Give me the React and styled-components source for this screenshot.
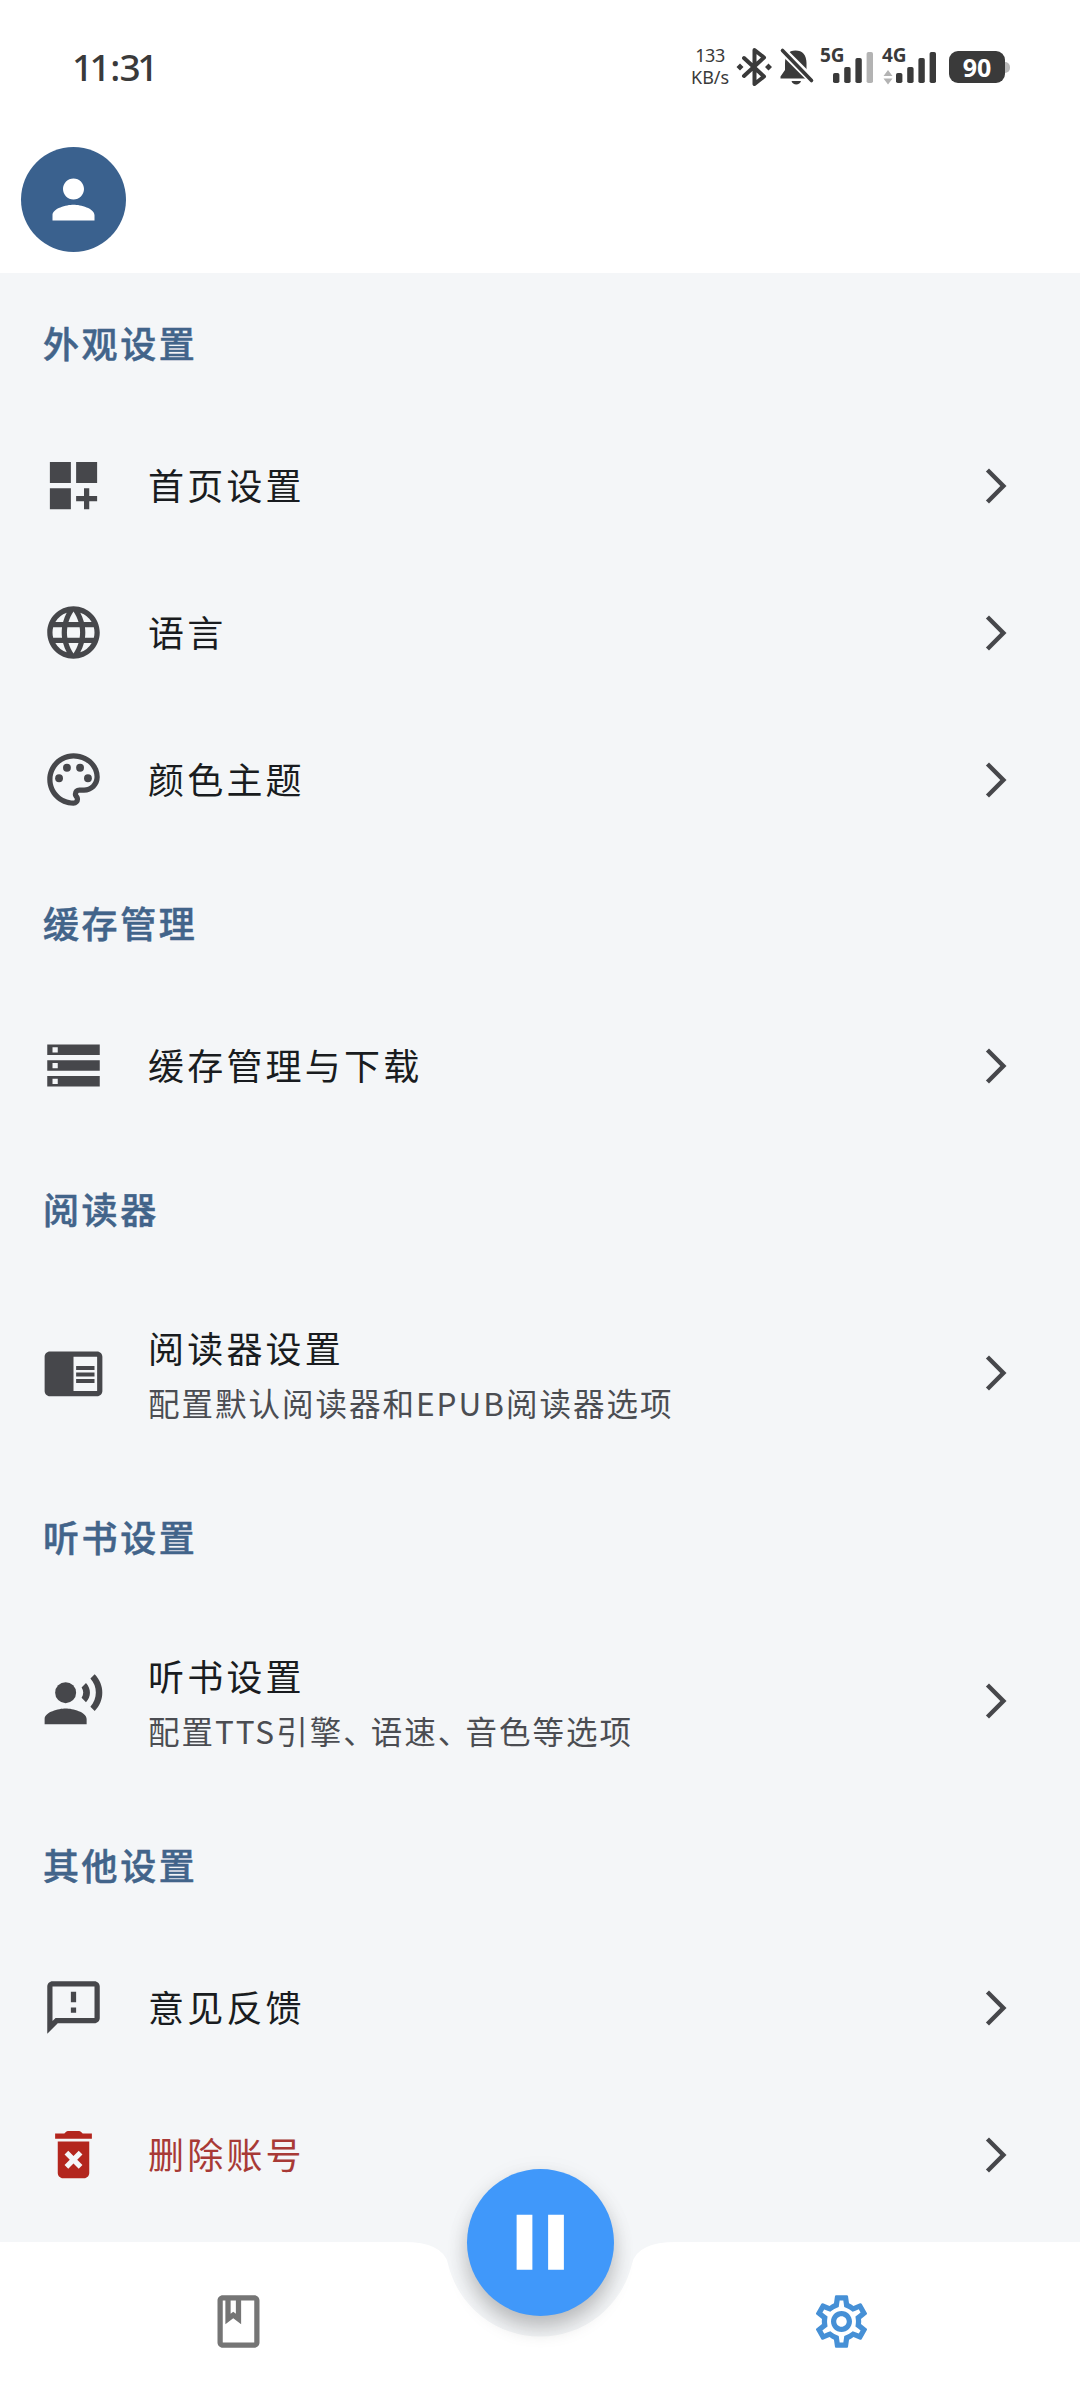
import { useState } from "react";
import styled, { createGlobalStyle } from "styled-components";
import {
  MdArrowForwardIos,
  MdChromeReaderMode,
  MdDashboardCustomize,
  MdLanguage,
  MdOutlineBook,
  MdOutlineFeedback,
  MdOutlinePalette,
  MdOutlineSettings,
  MdPause,
  MdPerson,
  MdRecordVoiceOver,
  MdStorage,
} from "react-icons/md";

const GlobalStyle = createGlobalStyle`
  * {
    box-sizing: border-box;
  }
  body {
    margin: 0;
    background: #fff;
    font-family: "Noto Sans CJK SC", sans-serif;
  }
  svg {
    display: block;
    flex-shrink: 0;
    overflow: visible;
  }
`;

const Screen = styled.div`
  width: 1080px;
  height: 2400px;
  display: flex;
  flex-direction: column;
  position: relative;
  overflow: hidden;
  background: #f4f6f8;
`;

const StatusBar = styled.div`
  height: 126px;
  padding: 8px 70px 0 72px;
  display: flex;
  align-items: center;
  justify-content: space-between;
  background: #fff;
  color: #3a3a3a;
`;

const Clock = styled.div`
  font-family: "Noto Sans", sans-serif;
  font-size: 37px;
  font-weight: 500;
  line-height: 50px;
  letter-spacing: -3.6px;
`;

const Colon = styled.span`
  margin: 0 3px 0 3px;
`;

const StatusIcons = styled.div`
  display: flex;
  align-items: center;
  height: 40px;
`;

const Speed = styled.div`
  width: 38px;
  margin-right: 7px;
  font-family: "Noto Sans", sans-serif;
  font-size: 18px;
  line-height: 22px;
  text-align: center;
  white-space: nowrap;
`;

const SpeedValue = styled.div`
  letter-spacing: -0.4px;
  margin-top: -2px;
`;

const Gap = styled.span`
  width: ${(props) => props.$size}px;
`;

const SignalBox = styled.div`
  position: relative;
`;

const SignalLabel = styled.span`
  position: absolute;
  left: 0;
  top: -5px;
  font-family: "Noto Sans", sans-serif;
  font-size: 19px;
  font-weight: 700;
  line-height: 26px;
`;

const Battery = styled.div`
  display: flex;
  align-items: center;
  margin-left: 12px;

  &::after {
    content: "";
    width: 5px;
    height: 11px;
    border-radius: 0 5px 5px 0;
    background: #b9b9b9;
  }
`;

const BatteryLevel = styled.div`
  width: 56px;
  height: 32px;
  border-radius: 9px;
  background: #3a3a3a;
  color: #fff;
  font-family: "Noto Sans", sans-serif;
  font-size: 25px;
  font-weight: 700;
  line-height: 32px;
  text-align: center;
`;

const Header = styled.header`
  height: 147px;
  padding: 21px;
  background: #fff;
`;

const Avatar = styled.div`
  width: 105px;
  height: 105px;
  border-radius: 50%;
  display: flex;
  align-items: center;
  justify-content: center;
  background: #3a618e;
  color: #fff;
`;

const Content = styled.main`
  flex: 1;
`;

const SectionTitle = styled.h2`
  height: 139px;
  margin: 0;
  padding: 41px 0 0 43px;
  font-size: 36px;
  font-weight: 500;
  line-height: 56px;
  letter-spacing: 2.6px;
  color: #42648a;
  -webkit-text-stroke: 0.5px #42648a;
`;

const Row = styled.div`
  height: ${(props) => (props.$tall ? 189 : 147)}px;
  padding: 0 63px 0 42px;
  display: flex;
  align-items: center;
  gap: 43px;
  color: ${(props) => (props.$danger ? "#b3261e" : "#46474b")};
`;

const RowText = styled.div`
  flex: 1;
  padding: ${(props) => (props.$single ? "0 0 4px" : "2px 0 0")};
`;

const RowTitle = styled.div`
  font-size: 36px;
  line-height: 56px;
  letter-spacing: 3.2px;
  color: ${(props) => (props.$danger ? "#a83a36" : "#191c20")};
`;

const RowSub = styled.div`
  font-size: 31.5px;
  line-height: 54px;
  letter-spacing: 2px;
  color: #4b4d52;
`;

const Comma = styled.span`
  letter-spacing: -3.8px;
`;

const BottomBar = styled.nav`
  height: 158px;
  padding: 0 37px 0 36px;
  display: flex;
  justify-content: space-between;
  background: #fff;
  clip-path: path(
    "M0 0H403.5Q443 0 448 21.7A94.5 94.5 0 0 0 632 21.7Q637 0 676.5 0H1080V158H0Z"
  );
`;

const Tab = styled.button`
  width: 404px;
  height: 158px;
  border: none;
  background: none;
  display: flex;
  align-items: center;
  justify-content: center;
  color: ${(props) => (props.$active ? "#4690d6" : "#757575")};
`;

const PauseButton = styled.button`
  position: absolute;
  left: 466.5px;
  bottom: 84px;
  width: 147px;
  height: 147px;
  border: none;
  border-radius: 50%;
  padding: 0;
  display: flex;
  align-items: center;
  justify-content: center;
  background: #4098fa;
  color: #fff;
  box-shadow: 0 12px 20px rgba(0, 0, 0, 0.22), 0 4px 26px rgba(0, 0, 0, 0.05);
`;

const Bluetooth = () => (
  <svg width="36" height="40" viewBox="0 0 36 40" fill="none">
    <path
      d="M8 11L28 29.5L18.5 37V3L28 10.5L8 29"
      stroke="#3a3a3a"
      strokeWidth="4"
      strokeLinejoin="round"
      strokeLinecap="round"
    />
    <path
      d="M4 16.5l3.5 3.5L4 23.5L.5 20zM32.5 16.5l3.5 3.5-3.5 3.5L29 20z"
      fill="#3a3a3a"
    />
  </svg>
);

const BellOff = () => (
  <svg width="36" height="40" viewBox="0 0 36 40">
    <path
      d="M6 17C6 8 9.5 3.5 16.5 3.5S27.5 8 27.5 16V23L33 31.5H1.5V29.5L6 23z"
      fill="#3a3a3a"
    />
    <path d="M12.5 34H22C21 38.5 13.5 38.5 12.5 34z" fill="#3a3a3a" />
    <path d="M1 1L35 35" stroke="#fff" strokeWidth="8" />
    <path
      d="M3.5 3.5L32.5 33.5"
      stroke="#3a3a3a"
      strokeWidth="3.6"
      strokeLinecap="round"
    />
  </svg>
);

const TrashCross = ({ size }) => (
  <svg width={size} height={size} viewBox="0 0 24 24" fill="currentColor">
    <path d="M5 6V4h3.5l.6-.6c.3-.3.6-.4 1-.4h3.8c.4 0 .7.1 1 .4l.6.6H19v2z" />
    <path d="M6 7h12v12c0 1.1-.9 2-2 2H8c-1.1 0-2-.9-2-2z" />
    <path
      d="M9.3 11.3l5.4 5.4M14.7 11.3l-5.4 5.4"
      stroke="#f4f6f8"
      strokeWidth="2"
    />
  </svg>
);

const Signal = ({ label, weak, data }) => (
  <SignalBox>
    <svg width={data ? 55 : 54} height="40">
      {data && (
        <path d="M1.5 29L6 23l4.5 6zM1.5 31.5L6 37.5l4.5-6z" fill="#b3b3b3" />
      )}
      {[10, 16, 25, 31].map((h, i) => (
        <rect
          key={h}
          x={(data ? 14 : 13) + i * 11.2}
          y={36 - h}
          width="6.4"
          height={h}
          rx="1.8"
          fill={weak && i === 3 ? "#b3b3b3" : "#3a3a3a"}
        />
      ))}
    </svg>
    <SignalLabel>{label}</SignalLabel>
  </SignalBox>
);

const sections = [
  {
    title: "外观设置",
    rows: [
      { icon: MdDashboardCustomize, title: "首页设置" },
      { icon: MdLanguage, title: "语言" },
      { icon: MdOutlinePalette, title: "颜色主题" },
    ],
  },
  {
    title: "缓存管理",
    rows: [{ icon: MdStorage, title: "缓存管理与下载" }],
  },
  {
    title: "阅读器",
    rows: [
      {
        icon: MdChromeReaderMode,
        title: "阅读器设置",
        sub: "配置默认阅读器和EPUB阅读器选项",
      },
    ],
  },
  {
    title: "听书设置",
    rows: [
      {
        icon: MdRecordVoiceOver,
        title: "听书设置",
        sub: "配置TTS引擎、语速、音色等选项",
      },
    ],
  },
  {
    title: "其他设置",
    rows: [
      { icon: MdOutlineFeedback, title: "意见反馈" },
      { icon: TrashCross, title: "删除账号", danger: true },
    ],
  },
];

// the CJK comma takes less room than a full-width character
const withCommas = (text) =>
  text
    .split("、")
    .flatMap((part, i) => (i === 0 ? [part] : [<Comma key={i}>、</Comma>, part]));

const App = () => {
  const [tab, setTab] = useState("settings");

  return (
    <Screen>
      <GlobalStyle />
      <StatusBar>
        <Clock>
          11<Colon>:</Colon>31
        </Clock>
        <StatusIcons>
          <Speed>
            <SpeedValue>133</SpeedValue>
            <div>KB/s</div>
          </Speed>
          <Bluetooth />
          <Gap $size={7} />
          <BellOff />
          <Gap $size={5} />
          <Signal label="5G" weak />
          <Gap $size={8} />
          <Signal label="4G" data />
          <Battery>
            <BatteryLevel>90</BatteryLevel>
          </Battery>
        </StatusIcons>
      </StatusBar>
      <Header>
        <Avatar>
          <MdPerson size={63} />
        </Avatar>
      </Header>
      <Content>
        {sections.map((section) => (
          <section key={section.title}>
            <SectionTitle>{section.title}</SectionTitle>
            {section.rows.map(({ icon: Icon, title, sub, danger }) => (
              <Row key={title} $tall={Boolean(sub)} $danger={danger}>
                <Icon size={63} />
                <RowText $single={!sub}>
                  <RowTitle $danger={danger}>{title}</RowTitle>
                  {sub && <RowSub>{withCommas(sub)}</RowSub>}
                </RowText>
                <MdArrowForwardIos size={42} color="#46474b" />
              </Row>
            ))}
          </section>
        ))}
      </Content>
      <BottomBar>
        <Tab $active={tab === "books"} onClick={() => setTab("books")}>
          <MdOutlineBook size={63} />
        </Tab>
        <Tab $active={tab === "settings"} onClick={() => setTab("settings")}>
          <MdOutlineSettings size={63} />
        </Tab>
      </BottomBar>
      <PauseButton>
        <MdPause size={94.5} />
      </PauseButton>
    </Screen>
  );
};

export default App;
